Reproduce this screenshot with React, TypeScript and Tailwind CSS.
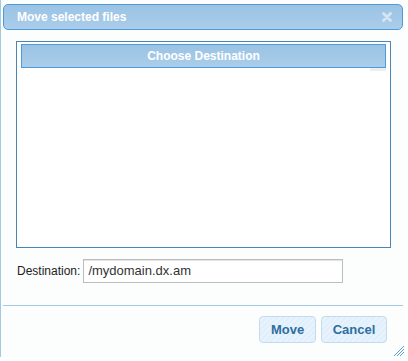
export default function App() {
  return (
    <div className="w-[408px] h-[361px] bg-white font-['Liberation_Sans',Arial,sans-serif]">
      <div className="relative w-[405px] h-[357px] border-l border-[#a6c9e2] bg-[#fcfdfd] pl-[2px] pt-1 flex flex-col">
        {/* Title bar */}
        <div className="w-[400px] h-[26px] rounded-[5px] border border-[#4f9ad8] bg-[linear-gradient(#9bc3e4,#aacdea)] flex items-center justify-between pl-[13px] pr-[10px]">
          <span className="text-[12px] font-bold text-white">Move selected files</span>
          <svg width="10" height="10" viewBox="0 0 10 10">
            <path d="M1.5 1.5 L8.5 8.5 M8.5 1.5 L1.5 8.5" stroke="#d6e5f2" strokeWidth="2.8" strokeLinecap="round" />
          </svg>
        </div>

        {/* Folder chooser */}
        <div className="ml-[13px] mt-[11px] w-[375px] h-[207px] border border-[#4a85b6] bg-white pt-[2px] px-[4px]">
          <div className="h-[24px] border border-[#4f9ad8] bg-[linear-gradient(#9bc3e4,#aacdea)] flex items-center justify-center">
            <span className="text-[12px] font-bold text-white">Choose Destination</span>
          </div>
          <div className="flex justify-end">
            <div className="w-[16px] h-[3px] bg-[#eeeeee]" />
          </div>
        </div>

        {/* Destination */}
        <div className="mt-[11px] ml-[14px] flex items-center gap-[3px]">
          <span className="text-[12px] text-[#222]">Destination:</span>
          <div className="w-[260px] h-[24px] border border-[#bdbdbd] bg-white shadow-[inset_0_1px_1px_#e2e2e2] flex items-center pl-[4px]">
            <span className="text-[13px] text-[#333]">/mydomain.dx.am</span>
          </div>
        </div>

        {/* Button pane */}
        <div className="mt-[22px] w-[400px] border-t border-[#a6c9e2] flex justify-end gap-[5px] pt-[10px] pr-[16px]">
          <button className="w-[57px] h-[27px] rounded-[4px] border border-[#c5dbec] bg-[repeating-linear-gradient(135deg,#dfeffc_0px,#dfeffc_2px,#e9f3fd_2px,#e9f3fd_4px)] text-[13px] font-bold text-[#2e6e9e]">
            Move
          </button>
          <button className="w-[66px] h-[27px] rounded-[4px] border border-[#c5dbec] bg-[repeating-linear-gradient(135deg,#dfeffc_0px,#dfeffc_2px,#e9f3fd_2px,#e9f3fd_4px)] text-[13px] font-bold text-[#2e6e9e]">
            Cancel
          </button>
        </div>

        {/* Resize grip */}
        <svg className="absolute right-[1px] bottom-[1px]" width="12" height="12" viewBox="0 0 12 12">
          <path d="M2 12 L12 2 M5 12 L12 5 M8 12 L12 8" stroke="#5c9ccc" strokeWidth="1" />
        </svg>
      </div>
    </div>
  );
}
